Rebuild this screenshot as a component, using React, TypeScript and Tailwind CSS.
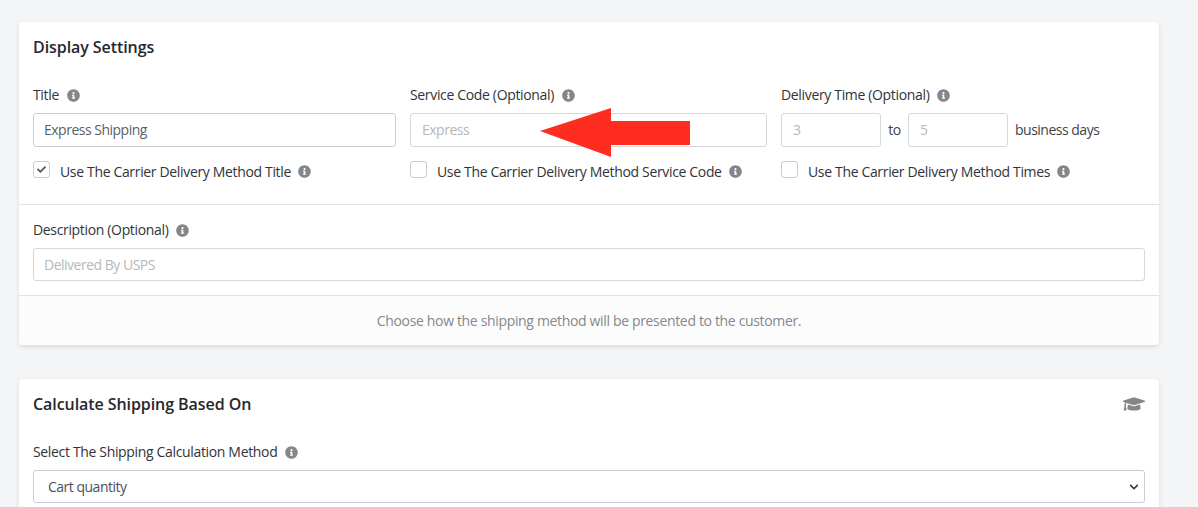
import { FaCheck, FaChevronDown, FaGraduationCap, FaInfoCircle } from "react-icons/fa";

function Info() {
  return <FaInfoCircle className="text-[13px] text-[#85868a] shrink-0" />;
}

function Label({ text, className = "" }: { text: string; className?: string }) {
  return (
    <div className={`flex items-center gap-2 h-[18px] text-[#303438] ${className}`}>
      <span className="pb-[2px]">{text}</span>
      <Info />
    </div>
  );
}

function CheckRow({ text, checked = false }: { text: string; checked?: boolean }) {
  return (
    <div className="flex items-center mt-[14px] h-[17px] text-[#303438]">
      <span className="w-[17px] h-[17px] rounded-[3px] border border-[#c9ccd1] bg-white flex items-center justify-center mr-[10px] shrink-0">
        {checked && <FaCheck className="text-[9px] text-[#55585c]" />}
      </span>
      <span className="leading-[20px] pt-[4px]">{text}</span>
      <span className="ml-[7px] pt-[4px]">
        <Info />
      </span>
    </div>
  );
}

const input = "border rounded-[3px] bg-white flex items-center tracking-[-0.5px]";

export default function App() {
  return (
    <div className="h-[507px] overflow-hidden bg-[#f4f5f7] pt-[22px] px-[19px] text-[14px] tracking-[-0.34px] relative font-[family-name:'Open_Sans','Noto_Sans',sans-serif]">
      <div className="w-[1140px] bg-white rounded-[4px] shadow-[0_2px_5px_rgba(0,0,0,0.1)]">
        <div className="px-[14px] pt-[15px] pb-[26px] border-b border-[#e1e3e5]">
          <h2 className="text-[16px] font-semibold leading-[20px] tracking-[-0.07px] text-[#23282d]">Display Settings</h2>
          <div className="grid grid-cols-[363px_357px_1fr] gap-x-[14px] mt-[29px]">
            <div>
              <Label text="Title" />
              <div className={`${input} h-[34px] pb-[2px] mt-[9px] pl-[10px] border-[#c9cdd6] text-[#5a5f66]`}>Express Shipping</div>
              <CheckRow text="Use The Carrier Delivery Method Title" checked />
            </div>
            <div>
              <Label text="Service Code (Optional)" />
              <div className={`${input} h-[34px] pb-[2px] mt-[9px] pl-[11px] border-[#d5d8dc] text-[#b5b8bc]`}>Express</div>
              <CheckRow text="Use The Carrier Delivery Method Service Code" />
            </div>
            <div>
              <Label text="Delivery Time (Optional)" />
              <div className="flex items-center mt-[9px] text-[#3f4448]">
                <div className={`${input} h-[34px] pb-[2px] w-[100px] pl-[11px] border-[#d5d8dc] text-[#b5b8bc]`}>3</div>
                <span className="w-[27px] text-center pb-[2px]">to</span>
                <div className={`${input} h-[34px] pb-[2px] w-[100px] pl-[11px] border-[#d5d8dc] text-[#b5b8bc]`}>5</div>
                <span className="ml-[7px] pb-[2px] tracking-[-0.5px]">business days</span>
              </div>
              <CheckRow text="Use The Carrier Delivery Method Times" />
            </div>
          </div>
        </div>
        <div className="px-[14px] pt-[16px] pb-[14px] border-b border-[#e1e3e5]">
          <Label text="Description (Optional)" />
          <div className={`${input} h-[33px] mt-[9px] pl-[10px] border-[#d5d8dc] text-[#b5b8bc]`}>Delivered By USPS</div>
        </div>
        <div className="h-[49px] bg-[#fcfcfc] rounded-b-[4px] flex items-center justify-center text-[#85888c]">
          Choose how the shipping method will be presented to the customer.
        </div>
      </div>

      <div className="w-[1140px] mt-[34px] bg-white rounded-[4px] shadow-[0_2px_5px_rgba(0,0,0,0.1)] px-[14px] pt-[14px] pb-[20px]">
        <div className="flex items-center justify-between">
          <h2 className="text-[16px] font-semibold leading-[20px] tracking-[-0.07px] text-[#23282d]">Calculate Shipping Based On</h2>
          <FaGraduationCap className="text-[22px] text-[#85868a]" />
        </div>
        <Label text="Select The Shipping Calculation Method" className="mt-[28px]" />
        <div className={`${input} h-[33px] mt-[9px] justify-between pl-[14px] pr-[5px] border-[#c9cdd6] text-[#4a5058]`}>
          <span>Cart quantity</span>
          <FaChevronDown className="text-[10px] text-[#3a3d42]" />
        </div>
      </div>

      <svg className="absolute left-[540px] top-[108px]" width="150" height="50" viewBox="0 0 150 50">
        <polygon points="0,23 71,0 71,13 150,13 150,37 71,37 71,49" fill="#ff2d20" />
      </svg>
    </div>
  );
}
